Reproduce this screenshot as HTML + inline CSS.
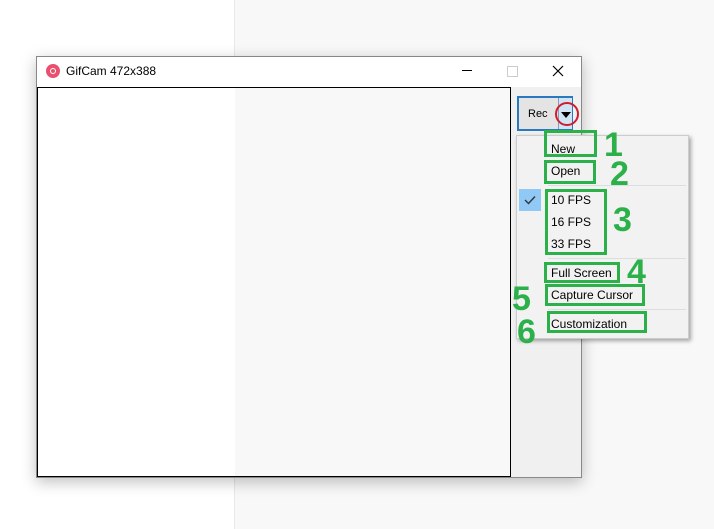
<html><head><style>
body{margin:0;width:714px;height:529px;position:relative;overflow:hidden;font-family:"Liberation Sans","Noto Sans CJK KR",sans-serif;background:#fff}
.a{position:absolute}
.g{position:absolute;border:3px solid #2bb04a;box-sizing:border-box}
.n{position:absolute;color:#2bb04a;font-weight:bold;font-size:34px;line-height:34px}
.t{position:absolute;font-size:12px;color:#000;left:551px}
</style></head><body>
<div class="a" style="left:234px;top:0;width:480px;height:529px;background:#f8f8f8;border-left:1px solid #e8e8e8"></div>
<div class="a" style="left:36px;top:56px;width:544px;height:420px;background:#f0f0f0;border:1px solid #888;box-shadow:0 4px 14px rgba(0,0,0,.25)"></div>
<div class="a" style="left:37px;top:57px;width:544px;height:30px;background:#fff"></div>
<div class="a" style="left:46px;top:64px;width:14px;height:14px;border-radius:50%;background:#e8506e"></div>
<div class="a" style="left:50px;top:68px;width:4px;height:4px;border-radius:50%;border:1px solid #fff;background:#e8506e"></div>
<div class="a" style="left:66px;top:64px;font-size:12px">GifCam 472x388</div>
<div class="a" style="left:462px;top:70px;width:10px;height:1px;background:#000"></div>
<div class="a" style="left:507px;top:66px;width:9px;height:9px;border:1px solid #ccc"></div>
<svg class="a" style="left:552px;top:65px" width="12" height="12"><path d="M1 1L11 11M11 1L1 11" stroke="#000" stroke-width="1.2"/></svg>
<div class="a" style="left:37px;top:87px;width:472px;height:388px;border:1px solid #000;background:linear-gradient(90deg,#fff 0,#fff 197px,#f8f8f8 197px)"></div>
<div class="a" style="left:517px;top:96px;width:56px;height:35px;border:2px solid #2a78c0;background:#e4e4e4;box-sizing:border-box"></div>
<div class="a" style="left:528px;top:108px;font-size:11px">Rec</div>
<div class="a" style="left:558px;top:98px;width:13px;height:31px;background:#d0e4f4;border-left:1px solid #89b"></div>
<div class="a" style="left:561px;top:112px;width:0;height:0;border-left:5px solid transparent;border-right:5px solid transparent;border-top:6px solid #000"></div>
<div class="a" style="left:555px;top:102px;width:24px;height:24px;border:2px solid #d01c2c;border-radius:50%;box-sizing:border-box"></div>
<div class="a" style="left:516px;top:135px;width:171px;height:202px;background:#f2f2f2;border:1px solid #ccc;box-shadow:2px 2px 4px rgba(0,0,0,.35)"></div>
<div class="a" style="left:548px;top:185px;width:138px;height:1px;background:#ddd"></div>
<div class="a" style="left:548px;top:258px;width:138px;height:1px;background:#ddd"></div>
<div class="a" style="left:548px;top:309px;width:138px;height:1px;background:#ddd"></div>
<div class="a" style="left:519px;top:189px;width:22px;height:22px;background:#90c8f6"></div>
<svg class="a" style="left:524px;top:195px" width="12" height="10"><path d="M1 5L4.5 8.5L11 1.5" stroke="#333" stroke-width="1.4" fill="none"/></svg>
<div class="t" style="top:142px">New</div>
<div class="t" style="top:164px">Open</div>
<div class="t" style="top:193px">10 FPS</div>
<div class="t" style="top:215px">16 FPS</div>
<div class="t" style="top:237px">33 FPS</div>
<div class="t" style="top:266px">Full Screen</div>
<div class="t" style="top:288px">Capture Cursor</div>
<div class="t" style="top:317px">Customization</div>
<div class="g" style="left:544px;top:130px;width:53px;height:27px"></div>
<div class="g" style="left:544px;top:160px;width:52px;height:24px"></div>
<div class="g" style="left:545px;top:189px;width:62px;height:66px"></div>
<div class="g" style="left:544px;top:262px;width:76px;height:21px"></div>
<div class="g" style="left:545px;top:284px;width:100px;height:22px"></div>
<div class="g" style="left:547px;top:311px;width:100px;height:22px"></div>
<div class="n" style="left:604px;top:128px">1</div>
<div class="n" style="left:610px;top:157px">2</div>
<div class="n" style="left:613px;top:203px">3</div>
<div class="n" style="left:627px;top:255px">4</div>
<div class="n" style="left:512px;top:282px">5</div>
<div class="n" style="left:517px;top:315px">6</div>
</body></html>
